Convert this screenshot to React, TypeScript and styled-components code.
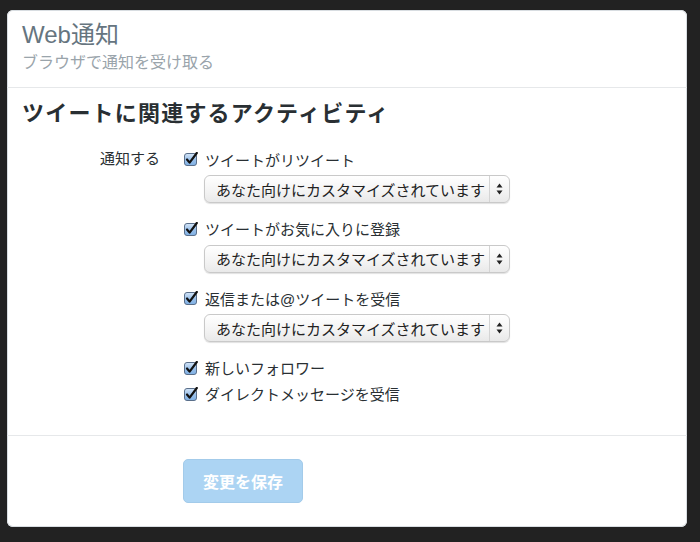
import React from "react";
import styled, { createGlobalStyle } from "styled-components";

const Global = createGlobalStyle`
  html, body { margin: 0; padding: 0; background: #222222; }
  body { font-family: "Liberation Sans", "Noto Sans CJK JP", sans-serif; }
`;

const Page = styled.div`
  width: 700px;
  height: 542px;
  padding: 10px 13px 15px 7px;
  box-sizing: border-box;
`;

const Card = styled.div`
  background: #ffffff;
  border-radius: 6px;
  height: 517px;
  box-sizing: border-box;
  display: flex;
  flex-direction: column;
  overflow: hidden;
  box-shadow: inset 0 0 0 1px #d8dde1;
`;

const Header = styled.header`
  padding: 10px 15px 13px;
  border-bottom: 1px solid #e6e8ea;
`;

const Title = styled.h1`
  margin: 0;
  font-size: 24px;
  line-height: 30px;
  font-weight: normal;
  color: #66757f;
`;

const Subtitle = styled.p`
  margin: 2px 0 0;
  font-size: 16px;
  line-height: 22px;
  color: #9aa4ab;
`;

const Section = styled.section`
  padding: 12px 15px 28px;
  border-bottom: 1px solid #e6e8ea;
`;

const SectionTitle = styled.h2`
  margin: 0 0 18px;
  font-size: 22px;
  line-height: 28px;
  font-weight: bold;
  color: #292f33;
  letter-spacing: 1.2px;
`;

const FormGrid = styled.div`
  display: grid;
  grid-template-columns: 138px 1fr;
  column-gap: 24px;
`;

const Label = styled.div`
  text-align: right;
  font-size: 15px;
  line-height: 26px;
  color: #292f33;
`;

const Controls = styled.div`
  display: flex;
  flex-direction: column;
`;

const Group = styled.div`
  display: flex;
  flex-direction: column;
  margin-bottom: ${(p: { $last?: boolean }) => (p.$last ? "0" : "12.5px")};
`;

const CheckRow = styled.label`
  display: flex;
  align-items: center;
  gap: 7px;
  height: 26px;
  font-size: 15px;
  color: #292f33;
`;

const SelectBox = styled.div`
  margin-top: 3px;
  margin-left: 20px;
  width: 306px;
  height: 28px;
  box-sizing: border-box;
  border-radius: 6px;
  border: 1px solid #c9c9c9;
  background: linear-gradient(#ffffff, #f3f3f3 60%, #e9e9e9);
  box-shadow: 0 1px 1px rgba(0, 0, 0, 0.12);
  display: flex;
  align-items: stretch;
  font-size: 15px;
  color: #222;
`;

const SelectText = styled.div`
  flex: 1;
  display: flex;
  align-items: center;
  padding-left: 11px;
`;

const SelectArrow = styled.div`
  width: 19px;
  border-left: 1px solid #d4d4d4;
  display: flex;
  align-items: center;
  justify-content: center;
`;

const Footer = styled.footer`
  padding: 23px 0 0 176px;
`;

const SaveButton = styled.button`
  width: 120px;
  height: 44px;
  border-radius: 5px;
  border: 1px solid #a3cbea;
  background: #acd4f3;
  color: #ffffff;
  font-family: "Liberation Sans", "Noto Sans CJK JP", sans-serif;
  font-size: 16px;
  font-weight: bold;
  cursor: default;
`;

const CheckIcon = () => (
  <svg width="14" height="14" viewBox="0 0 14 14">
    <defs>
      <linearGradient id="cbg" x1="0" y1="0" x2="0" y2="1">
        <stop offset="0" stopColor="#d5e6f8" />
        <stop offset="0.5" stopColor="#9cc1ea" />
        <stop offset="1" stopColor="#7fb0e4" />
      </linearGradient>
    </defs>
    <rect x="0.5" y="1.5" width="12" height="12" rx="2.5" fill="url(#cbg)" stroke="#5a6f8a" strokeWidth="1" />
    <path d="M3 7.5 L5.6 10.6 L12.8 1" fill="none" stroke="#111" strokeWidth="2.2" strokeLinecap="round" strokeLinejoin="round" />
  </svg>
);

const ArrowIcon = () => (
  <svg width="7" height="12" viewBox="0 0 7 12">
    <path d="M3.5 0.5 L6.5 4.5 L0.5 4.5 Z" fill="#222" />
    <path d="M3.5 11.5 L6.5 7.5 L0.5 7.5 Z" fill="#222" />
  </svg>
);

const Select = () => (
  <SelectBox>
    <SelectText>あなた向けにカスタマイズされています</SelectText>
    <SelectArrow>
      <ArrowIcon />
    </SelectArrow>
  </SelectBox>
);

const Check = ({ children }: { children: React.ReactNode }) => (
  <CheckRow>
    <CheckIcon />
    <span>{children}</span>
  </CheckRow>
);

export default function App() {
  return (
    <>
      <Global />
      <Page>
        <Card>
          <Header>
            <Title>Web通知</Title>
            <Subtitle>ブラウザで通知を受け取る</Subtitle>
          </Header>
          <Section>
            <SectionTitle>ツイートに関連するアクティビティ</SectionTitle>
            <FormGrid>
              <Label>通知する</Label>
              <Controls>
                <Group>
                  <Check>ツイートがリツイート</Check>
                  <Select />
                </Group>
                <Group>
                  <Check>ツイートがお気に入りに登録</Check>
                  <Select />
                </Group>
                <Group>
                  <Check>返信または@ツイートを受信</Check>
                  <Select />
                </Group>
                <Group $last>
                  <Check>新しいフォロワー</Check>
                  <Check>ダイレクトメッセージを受信</Check>
                </Group>
              </Controls>
            </FormGrid>
          </Section>
          <Footer>
            <SaveButton>変更を保存</SaveButton>
          </Footer>
        </Card>
      </Page>
    </>
  );
}
